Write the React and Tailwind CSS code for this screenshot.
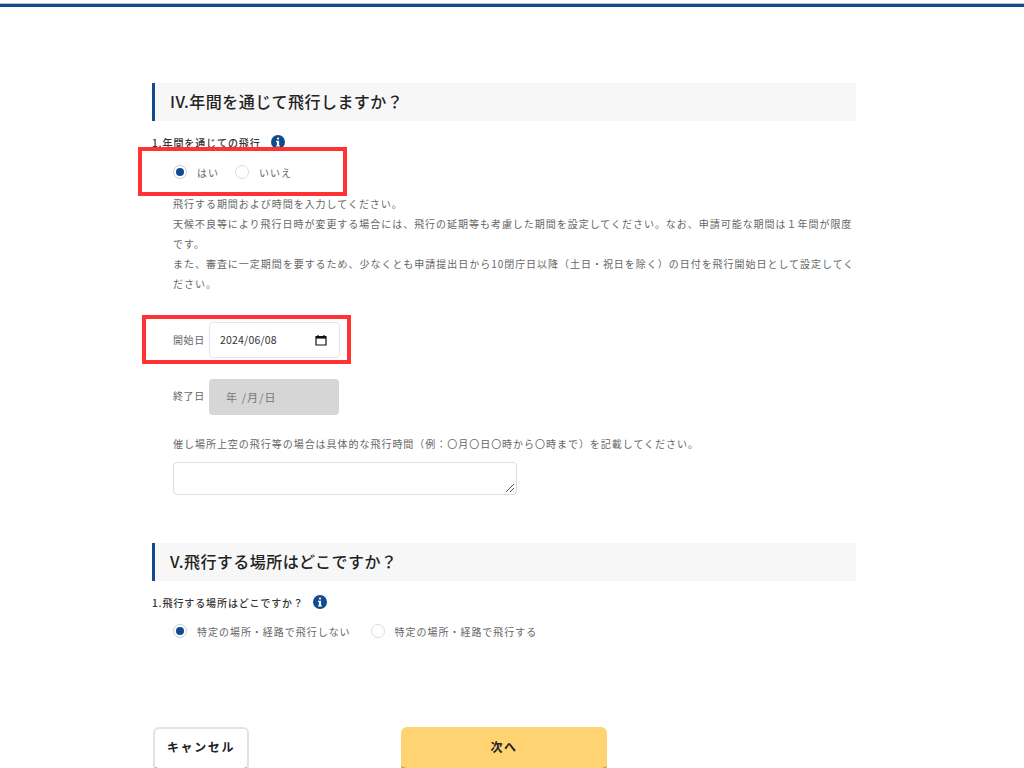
function Info() {
  return (
    <svg width="14" height="14" viewBox="0 0 14 14" className="shrink-0">
      <circle cx="7" cy="7" r="7" fill="#0f4c8f" />
      <rect x="5.9" y="2.4" width="2.2" height="2.2" rx="1" fill="#fff" />
      <path d="M5 5.8h3.1v4.6H9v1.2H5v-1.2h.9V7H5z" fill="#fff" />
    </svg>
  );
}
function Radio({ on, label }) {
  return (
    <div className="flex items-center">
      <span className={`w-[14px] h-[14px] rounded-full border flex items-center justify-center bg-white ${on ? "border-[#c3cfdd]" : "border-[#dddddd]"}`}>
        {on && <span className="w-[8px] h-[8px] rounded-full bg-[#134a8e]" />}
      </span>
      <span className="ml-[10px] text-[10px] tracking-[0.97px] text-[#666666]">{label}</span>
    </div>
  );
}
function Heading({ children }) {
  return (
    <div className="h-[38px] ml-[152px] w-[704px] bg-[#f7f7f7] border-l-[3px] border-[#134a8e] pl-[15px] pb-[2px] flex items-center text-[16px] font-medium tracking-[0.45px] text-[#222222]">
      {children}
    </div>
  );
}
function CalIcon() {
  return (
    <svg width="12" height="12" viewBox="0 0 12 12" fill="none">
      <path d="M1 2.5h10v8.5H1z" stroke="#111" strokeWidth="1.2" />
      <path d="M1 2h10v2.6H1z" fill="#111" />
      <path d="M3 1v1.5M9 1v1.5" stroke="#111" strokeWidth="1.2" />
    </svg>
  );
}
export default function App() {
  return (
    <div className="relative w-[1024px] h-[768px] overflow-hidden bg-white" style={{ fontFamily: '"Noto Sans CJK JP", "Noto Sans", sans-serif' }}>
      <div className="mt-[3px] h-[4px] bg-[#134a8e] border-t border-[#b5bec9]" />
      <div className="h-[76px]" />
      <Heading>IV.年間を通じて飛行しますか？</Heading>

      <div className="ml-[152px] mt-[13px] h-[16px] flex items-center text-[10px] tracking-[0.9px] text-[#333333] font-medium">
        <span>1.年間を通じての飛行</span>
        <span className="ml-[10px]"><Info /></span>
      </div>

      <div className="ml-[173px] mt-[14px] h-[16px] flex items-center gap-[16px]">
        <Radio on label="はい" />
        <Radio label="いいえ" />
      </div>

      <div className="ml-[173px] mt-[14px] w-[683px] text-[10px] leading-[20px] tracking-[0.97px] text-[#666666]">
        <p>飛行する期間および時間を入力してください。</p>
        <p>天候不良等により飛行日時が変更する場合には、飛行の延期等も考慮した期間を設定してください。なお、申請可能な期間は１年間が限度です。</p>
        <p>また、審査に一定期間を要するため、少なくとも申請提出日から10閉庁日以降（土日・祝日を除く）の日付を飛行開始日として設定してください。</p>
      </div>

      <div className="ml-[173px] mt-[28px] flex items-center">
        <span className="w-[36px] pb-[2px] text-[10px] tracking-[0.6px] text-[#666666]">開始日</span>
        <div className="w-[131px] h-[36px] border border-[#e4e4e4] rounded-[4px] pl-[10px] pr-[12px] flex items-center justify-between text-[10.5px] tracking-[0.2px] text-[#333333]">
          <span>2024/06/08</span>
          <CalIcon />
        </div>
      </div>

      <div className="ml-[173px] mt-[21px] flex items-center">
        <span className="w-[36px] pb-[4px] text-[10px] tracking-[0.6px] text-[#666666]">終了日</span>
        <div className="w-[130px] h-[36px] bg-[#d6d6d6] rounded-[4px] pl-[17px] flex items-center text-[11px] tracking-[1.1px] text-[#777777]">
          年 /月/日
        </div>
      </div>

      <p className="ml-[173px] mt-[21px] text-[10px] leading-[16px] tracking-[0.97px] text-[#666666]">
        催し場所上空の飛行等の場合は具体的な飛行時間（例：〇月〇日〇時から〇時まで）を記載してください。
      </p>

      <div className="relative ml-[173px] mt-[10px] w-[344px] h-[33px] border border-[#dddddd] rounded-[4px]">
        <svg width="10" height="10" viewBox="0 0 10 10" className="absolute right-[1px] bottom-[1px]">
          <path d="M1 9L9 1M5 9L9 5" stroke="#555" strokeWidth="1" />
        </svg>
      </div>

      <div className="h-[48px]" />
      <Heading>V.飛行する場所はどこですか？</Heading>

      <div className="ml-[152px] mt-[13px] h-[16px] flex items-center text-[10px] tracking-[0.9px] text-[#333333] font-medium">
        <span>1.飛行する場所はどこですか？</span>
        <span className="ml-[9px]"><Info /></span>
      </div>

      <div className="ml-[173px] mt-[13px] h-[16px] flex items-center gap-[20px]">
        <Radio on label="特定の場所・経路で飛行しない" />
        <Radio label="特定の場所・経路で飛行する" />
      </div>

      <div className="ml-[153px] mt-[88px] flex items-start">
        <div className="w-[96px] h-[44px] pb-[3px] bg-white border-2 border-[#e2e2e2] border-b-[3px] border-b-[#888888] rounded-[6px] flex items-center justify-center text-[12px] font-bold tracking-[1.6px] text-[#222222]">
          キャンセル
        </div>
        <div className="ml-[152px] w-[206px] h-[44px] pb-[2px] bg-[#ffd272] border-b-[3px] border-b-[#b8903c] rounded-[6px] flex items-center justify-center text-[12px] font-bold tracking-[1.5px] text-[#222222]">
          次へ
        </div>
      </div>

      <div className="absolute left-[138px] top-[147px] w-[209px] h-[49px] border-[4px] border-[#ff3333]" />
      <div className="absolute left-[142px] top-[315px] w-[209px] h-[49px] border-[4px] border-[#ff3333]" />
    </div>
  );
}
